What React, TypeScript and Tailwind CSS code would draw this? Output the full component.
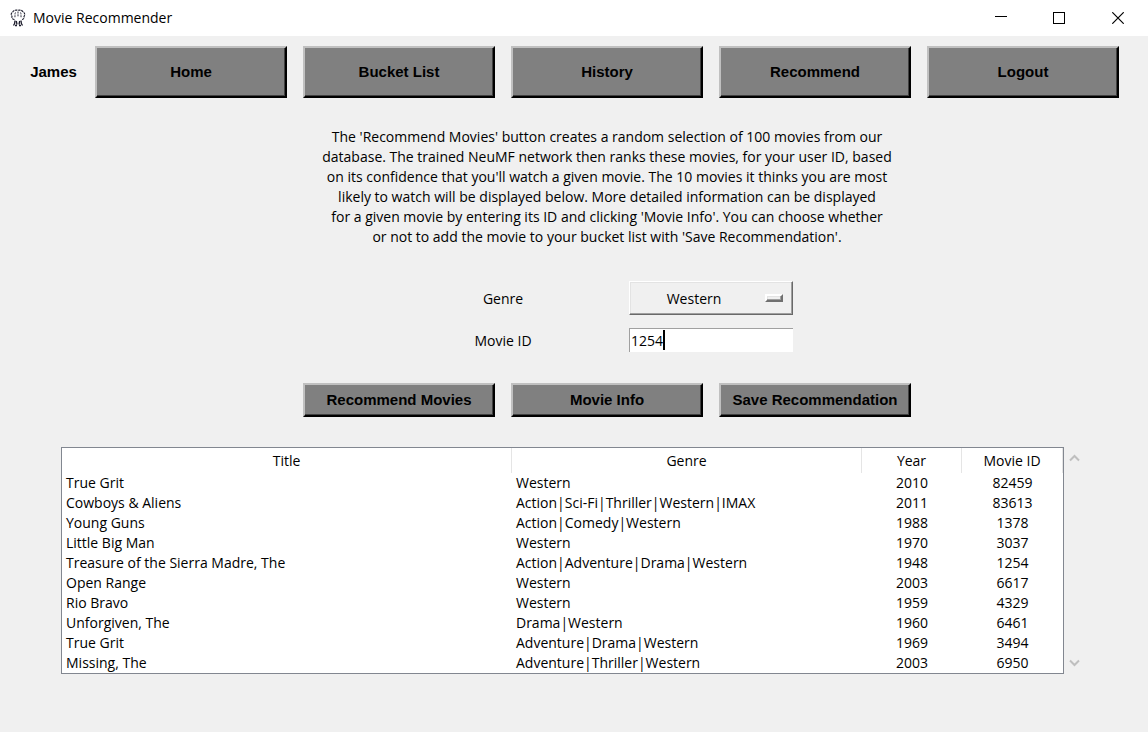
import { useState } from "react";
import type { ReactNode } from "react";

type Movie = { title: string; genre: string; year: number; id: number };

const movies: Movie[] = [
  { title: "True Grit", genre: "Western", year: 2010, id: 82459 },
  { title: "Cowboys & Aliens", genre: "Action|Sci-Fi|Thriller|Western|IMAX", year: 2011, id: 83613 },
  { title: "Young Guns", genre: "Action|Comedy|Western", year: 1988, id: 1378 },
  { title: "Little Big Man", genre: "Western", year: 1970, id: 3037 },
  { title: "Treasure of the Sierra Madre, The", genre: "Action|Adventure|Drama|Western", year: 1948, id: 1254 },
  { title: "Open Range", genre: "Western", year: 2003, id: 6617 },
  { title: "Rio Bravo", genre: "Western", year: 1959, id: 4329 },
  { title: "Unforgiven, The", genre: "Drama|Western", year: 1960, id: 6461 },
  { title: "True Grit", genre: "Adventure|Drama|Western", year: 1969, id: 3494 },
  { title: "Missing, The", genre: "Adventure|Thriller|Western", year: 2003, id: 6950 },
];

function RaisedButton({ children, className }: { children: ReactNode; className: string }) {
  return (
    <button
      type="button"
      className={`border-2 border-t-[#c0c0c0] border-r-black border-b-black border-l-[#c0c0c0] bg-[#808080] font-['Liberation_Sans',Arial,sans-serif] text-[15px] leading-5 font-bold whitespace-nowrap shadow-[inset_-1px_-1px_0_#404040] ${className}`}
    >
      {children}
    </button>
  );
}

function AppIcon() {
  return (
    <svg width="16" height="18" viewBox="0 0 16 18" fill="none" stroke="#1c1c2c" aria-hidden="true">
      <path strokeWidth="1.1" strokeDasharray="2.4 .7" d="M4.500 10.500C2.500 10.500 1.500 9 2 7.300C.8 6 1 4 2.600 3.200C3.500 1.500 5.500.8 8 1.200C10.500.8 12.500 1.500 13.300 3.200C15 4 15.200 6 14 7.300C14.500 9 13.500 10.500 11.500 10.500" />
      <path strokeWidth=".9" strokeDasharray="2 .8" d="M5.500 3.500C4.500 5 5.500 7 4.700 9M8 2.500v5M10.500 3.500C11.500 5 10.500 7 11.300 9" />
      <path strokeWidth="1.3" d="M5 11.500L4.600 14.500L3.500 16.500M6.300 12L7 15.500M9.700 12L9 15.500M11 11.500L11.400 14.500L12.500 16.500M5 16.500h2M9 16.500h2" />
    </svg>
  );
}

export default function App() {
  const [genre, setGenre] = useState("Western");
  const [movieId, setMovieId] = useState("1254");

  return (
    <div className="min-h-screen bg-[#f0f0f0] font-['Open_Sans','Noto_Sans',sans-serif] text-sm leading-5 text-black">
      <header className="flex h-9 items-center bg-white pl-[10px]">
        <AppIcon />
        <h1 className="flex-1 pl-[7px]">Movie Recommender</h1>
        <div className="flex h-9">
          <button type="button" aria-label="Minimize" className="flex w-[58px] items-center justify-center">
            <svg width="12" height="12" stroke="#000" shapeRendering="crispEdges"><path d="M0 4.500h12" /></svg>
          </button>
          <button type="button" aria-label="Maximize" className="flex w-[58px] items-center justify-center">
            <svg width="12" height="12" fill="none" stroke="#000" shapeRendering="crispEdges"><path d="M.5.5h11v11H.5z" /></svg>
          </button>
          <button type="button" aria-label="Close" className="flex w-[60px] items-center justify-center">
            <svg width="12" height="12" stroke="#000" strokeWidth="1.200"><path d="M.3.3l11.400 11.400M11.700.3L.3 11.700" /></svg>
          </button>
        </div>
      </header>

      <nav className="flex items-center pt-[10px] pr-[29px]">
        <span className="w-[95px] pl-3 text-center font-['Liberation_Sans',Arial,sans-serif] text-[15px] font-bold">James</span>
        <div className="grid flex-1 grid-cols-5 gap-4">
          <RaisedButton className="h-[52px]">Home</RaisedButton>
          <RaisedButton className="h-[52px]">Bucket List</RaisedButton>
          <RaisedButton className="h-[52px]">History</RaisedButton>
          <RaisedButton className="h-[52px]">Recommend</RaisedButton>
          <RaisedButton className="h-[52px]">Logout</RaisedButton>
        </div>
      </nav>

      <main>
        <div className="pr-[29px] pl-[95px]">
          <p className="pt-[29px] text-center">
            The 'Recommend Movies' button creates a random selection of 100 movies from our<br />
            database. The trained NeuMF network then ranks these movies, for your user ID, based<br />
            on its confidence that you'll watch a given movie. The 10 movies it thinks you are most<br />
            likely to watch will be displayed below. More detailed information can be displayed<br />
            for a given movie by entering its ID and clicking 'Movie Info'. You can choose whether<br />
            or not to add the movie to your bucket list with 'Save Recommendation'.
          </p>

          <form className="mt-[34px]" onSubmit={(e) => e.preventDefault()}>
            <div className="mx-auto grid w-[416px] grid-cols-2 items-center gap-y-[13px]">
              <label htmlFor="genre" className="pt-px text-center">Genre</label>
              <div className="relative mx-auto w-[164px]">
                <select
                  id="genre"
                  value={genre}
                  onChange={(e) => setGenre(e.target.value)}
                  className="block h-[34px] w-full appearance-none border border-t-white border-r-[#696969] border-b-[#696969] border-l-white bg-[#f0f0f0] pt-px pr-[34px] text-center shadow-[inset_-1px_-1px_0_#a0a0a0,inset_1px_1px_0_#e3e3e3] outline-none"
                >
                  <option>Western</option>
                  <option>Action</option>
                  <option>Comedy</option>
                  <option>Drama</option>
                </select>
                <span className="pointer-events-none absolute top-[13px] right-[10px] h-2 w-[18px] border-2 border-t-white border-r-[#707070] border-b-[#707070] border-l-white shadow-[inset_-1px_-1px_0_#a0a0a0,inset_1px_1px_0_#e3e3e3]" />
              </div>
              <label htmlFor="movie-id" className="pt-px text-center">Movie ID</label>
              <div className="relative mx-auto w-[164px]">
                <input
                  id="movie-id"
                  type="text"
                  value={movieId}
                  onChange={(e) => setMovieId(e.target.value)}
                  className="block h-6 w-full border-t border-l border-[#a0a0a0] bg-white pl-px caret-transparent outline-none"
                />
                <span className="pointer-events-none absolute top-[2px] left-[2px] h-5 border-r-2 border-black text-transparent" aria-hidden="true">{movieId}</span>
              </div>
            </div>

            <div className="mt-[31px] grid grid-cols-5 gap-4">
              <RaisedButton className="col-start-2 h-[34px]">Recommend Movies</RaisedButton>
              <RaisedButton className="h-[34px]">Movie Info</RaisedButton>
              <RaisedButton className="h-[34px]">Save Recommendation</RaisedButton>
            </div>
          </form>
        </div>

        <div className="flex pt-[30px] pr-[68px] pl-[61px]">
          <div className="flex-1 border border-[#828790] bg-white">
            <table className="w-full table-fixed border-collapse">
              <colgroup>
                <col className="w-[45%]" />
                <col className="w-[35%]" />
                <col className="w-[100px]" />
                <col className="w-[101px]" />
              </colgroup>
              <thead>
                <tr className="h-[25px]">
                  {["Title", "Genre", "Year", "Movie ID"].map((heading) => (
                    <th key={heading} scope="col" className="p-0 pr-px font-normal shadow-[inset_-1px_0_0_#e5e5e5]">{heading}</th>
                  ))}
                </tr>
              </thead>
              <tbody>
                {movies.map((movie) => (
                  <tr key={movie.id} className="h-5">
                    <td className="py-0 pr-0 pl-1">{movie.title}</td>
                    <td className="py-0 pr-0 pl-1">{movie.genre}</td>
                    <td className="p-0 text-center">{movie.year}</td>
                    <td className="p-0 text-center">{movie.id}</td>
                  </tr>
                ))}
              </tbody>
            </table>
          </div>
          <div className="flex w-4 flex-col items-end justify-between pt-[7px] pb-[7px]">
            <button type="button" aria-label="Scroll up">
              <svg className="block" width="11" height="8" fill="none" stroke="#bfbfbf" strokeWidth="2"><path d="M1 6.500L5.500 2L10 6.500" /></svg>
            </button>
            <button type="button" aria-label="Scroll down">
              <svg className="block" width="11" height="8" fill="none" stroke="#bfbfbf" strokeWidth="2"><path d="M1 1.500L5.500 6L10 1.500" /></svg>
            </button>
          </div>
        </div>
      </main>
    </div>
  );
}
